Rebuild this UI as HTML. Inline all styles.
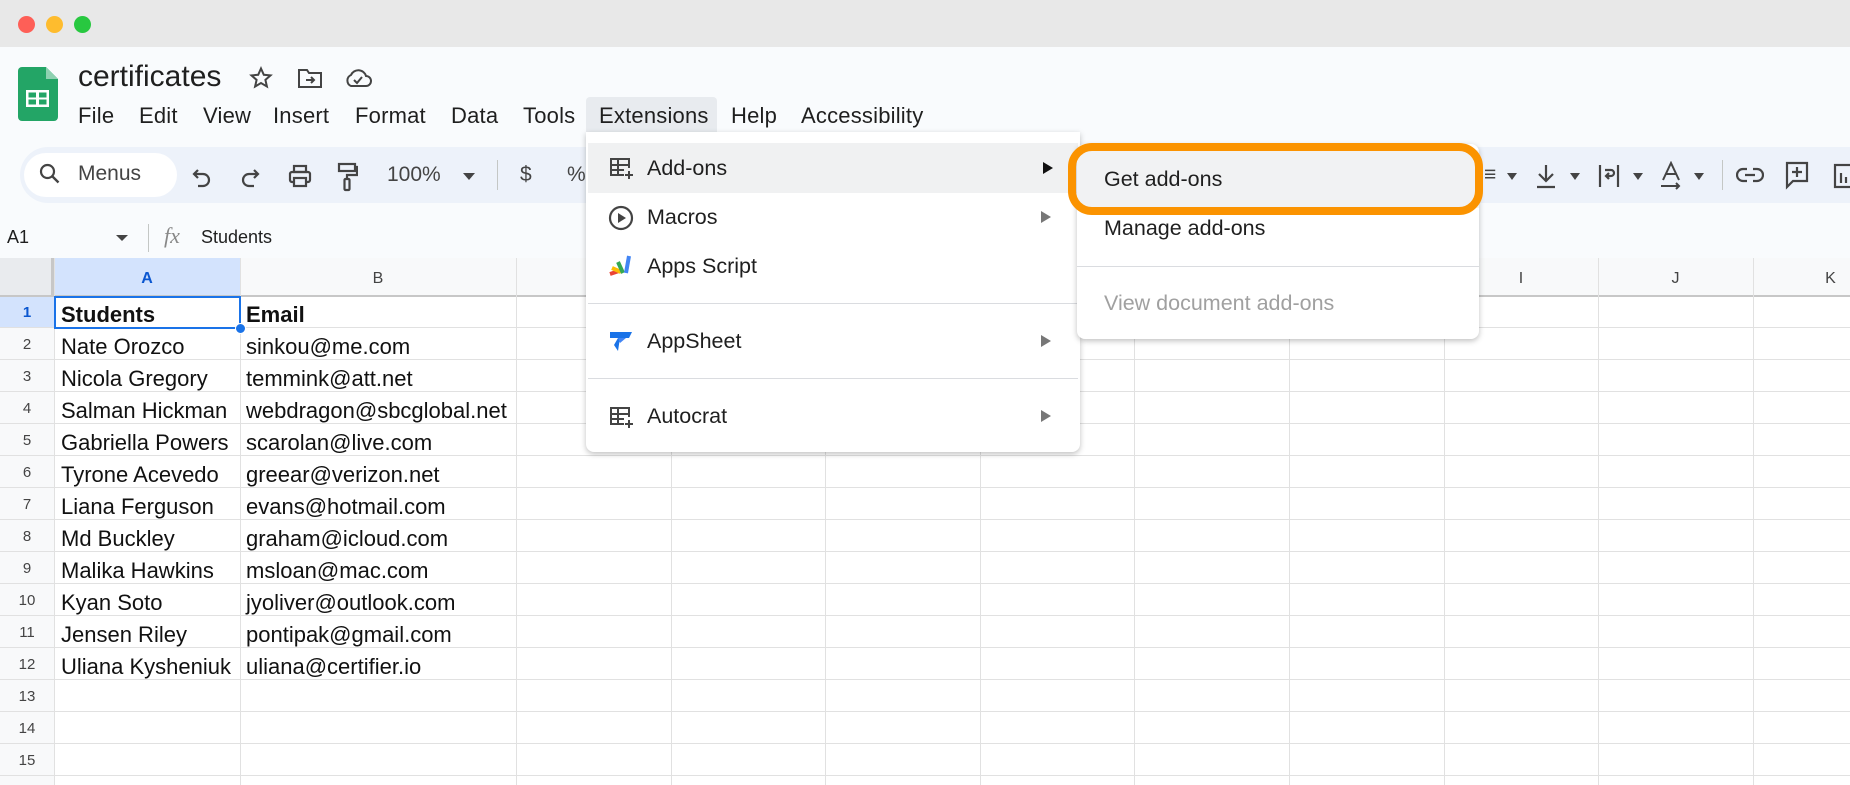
<!DOCTYPE html>
<html><head><meta charset="utf-8"><style>
*{margin:0;padding:0;box-sizing:border-box}
body{width:1850px;height:785px;overflow:hidden;background:#f9fbfd;font-family:"Liberation Sans",Arial,sans-serif;color:#1f1f1f;position:relative}
.a{position:absolute}
.t{position:absolute;white-space:nowrap}
.menu span{position:absolute;top:103px;font-size:22px;letter-spacing:0.2px}
.vl{position:absolute;top:258px;width:1px;height:527px;background:#e1e1e1}
.rn{position:absolute;left:0;width:54px;text-align:center;font-size:15px;color:#444}
.c{position:absolute;font-size:22px;color:#111;white-space:nowrap}
.ch{position:absolute;top:270px;font-size:16px;color:#444;text-align:center}
.mi{position:absolute;font-size:21.5px;color:#1f1f1f;white-space:nowrap}
.arr{position:absolute;left:1041px;width:0;height:0;border-left:10px solid #777;border-top:6px solid transparent;border-bottom:6px solid transparent}
</style></head><body>
<div class="a" style="left:0;top:0;width:1850px;height:47px;background:#e8e8e8"></div>
<div class="a" style="left:18px;top:16px;width:17px;height:17px;border-radius:50%;background:#fe5f57"></div>
<div class="a" style="left:46px;top:16px;width:17px;height:17px;border-radius:50%;background:#febc2e"></div>
<div class="a" style="left:74px;top:16px;width:17px;height:17px;border-radius:50%;background:#28c840"></div>

<svg class="a" style="left:18px;top:67px" width="40" height="54" viewBox="0 0 40 54"><path d="M4 0H28L40 12V50a4 4 0 0 1-4 4H4a4 4 0 0 1-4-4V4a4 4 0 0 1 4-4z" fill="#23a566"/><path d="M28 0V12H40z" fill="#8ed1b1"/><rect x="8" y="23" width="23" height="17" fill="#fff"/><rect x="10.5" y="25.5" width="7.5" height="5" fill="#23a566"/><rect x="21" y="25.5" width="7.5" height="5" fill="#23a566"/><rect x="10.5" y="32.5" width="7.5" height="5" fill="#23a566"/><rect x="21" y="32.5" width="7.5" height="5" fill="#23a566"/></svg>
<div class="t" style="left:78px;top:60px;font-size:30px;color:#1f1f1f">certificates</div>
<svg class="a" style="left:249px;top:66px" width="24" height="24" viewBox="0 0 24 24"><path d="M12 2.5l2.8 6.3 6.7.6-5.1 4.5 1.5 6.6L12 17l-5.9 3.5 1.5-6.6-5.1-4.5 6.7-.6z" fill="none" stroke="#444" stroke-width="2"/></svg>
<svg class="a" style="left:297px;top:67px" width="26" height="22" viewBox="0 0 26 22"><path d="M2 3h8l2 3h12v14H2z" fill="none" stroke="#444" stroke-width="2"/><path d="M9 13h8M14 10l3 3-3 3" fill="none" stroke="#444" stroke-width="2"/></svg>
<svg class="a" style="left:344px;top:67px" width="28" height="22" viewBox="0 0 28 22"><path d="M7 19h15a5 5 0 0 0 0-10 8 8 0 0 0-15-1 6 6 0 0 0 0 11z" fill="none" stroke="#444" stroke-width="2"/><path d="M10 13l3 3 5-6" fill="none" stroke="#444" stroke-width="2"/></svg>

<div class="a" style="left:586px;top:97px;width:131px;height:35px;background:#e8ebef;border-radius:4px 4px 0 0"></div>
<div class="menu">
<span style="left:78px">File</span><span style="left:139px">Edit</span><span style="left:203px">View</span><span style="left:273px">Insert</span><span style="left:355px">Format</span><span style="left:451px">Data</span><span style="left:523px">Tools</span><span style="left:599px">Extensions</span><span style="left:731px">Help</span><span style="left:801px">Accessibility</span>
</div>

<div class="a" style="left:20px;top:147px;width:1860px;height:56px;background:#edf2fa;border-radius:28px"></div>
<div class="a" style="left:24px;top:153px;width:153px;height:44px;background:#fff;border-radius:22px"></div>
<svg class="a" style="left:38px;top:162px" width="24" height="24" viewBox="0 0 24 24"><circle cx="9.5" cy="9.5" r="6.5" fill="none" stroke="#444" stroke-width="2.2"/><path d="M14.5 14.5l6 6" stroke="#444" stroke-width="2.4"/></svg>
<div class="t" style="left:78px;top:162px;font-size:21px;color:#444">Menus</div>
<svg class="a" style="left:190px;top:164px" width="24" height="24" viewBox="0 0 24 24"><path d="M8 6L4 10l4 4M4 10h9a6 6 0 0 1 0 12H8" fill="none" stroke="#444" stroke-width="2.2"/></svg>
<svg class="a" style="left:238px;top:164px" width="24" height="24" viewBox="0 0 24 24"><path d="M16 6l4 4-4 4M20 10h-9a6 6 0 0 0 0 12h5" fill="none" stroke="#444" stroke-width="2.2"/></svg>
<svg class="a" style="left:287px;top:163px" width="26" height="26" viewBox="0 0 26 26"><rect x="7" y="3" width="12" height="6" fill="none" stroke="#444" stroke-width="2.2"/><rect x="3" y="9" width="20" height="10" rx="2" fill="none" stroke="#444" stroke-width="2.2"/><rect x="7" y="15" width="12" height="8" fill="#edf2fa" stroke="#444" stroke-width="2.2"/></svg>
<svg class="a" style="left:336px;top:162px" width="22" height="30" viewBox="0 0 22 30"><rect x="3" y="2" width="16" height="7" fill="none" stroke="#444" stroke-width="2.2"/><path d="M19 5h2v8H11v4" fill="none" stroke="#444" stroke-width="2.2"/><rect x="8.5" y="17" width="5" height="11" rx="1" fill="none" stroke="#444" stroke-width="2.2"/></svg>
<div class="t" style="left:387px;top:163px;font-size:21px;color:#444">100%</div>
<div class="a" style="left:463px;top:173px;border-top:7px solid #444;border-left:6px solid transparent;border-right:6px solid transparent"></div>
<div class="a" style="left:497px;top:160px;width:1px;height:30px;background:#c4c7c5"></div>
<div class="t" style="left:520px;top:163px;font-size:21px;color:#444">$</div>
<div class="t" style="left:567px;top:163px;font-size:21px;color:#444">%</div>
<div class="t" style="left:1484px;top:163px;font-size:21px;color:#444">&#8801;</div>
<div class="a" style="left:1507px;top:173px;border-top:7px solid #444;border-left:5px solid transparent;border-right:5px solid transparent"></div>
<svg class="a" style="left:1534px;top:162px" width="24" height="28" viewBox="0 0 24 28"><path d="M12 3v16M5 12l7 7 7-7M3 25h18" fill="none" stroke="#444" stroke-width="2.2"/></svg>
<div class="a" style="left:1570px;top:173px;border-top:7px solid #444;border-left:5px solid transparent;border-right:5px solid transparent"></div>
<svg class="a" style="left:1597px;top:162px" width="24" height="28" viewBox="0 0 24 28"><path d="M3 3v22M21 3v22M8 8h6a3 3 0 0 1 0 6H9M12 11l-3 3 3 3" fill="none" stroke="#444" stroke-width="2.2"/></svg>
<div class="a" style="left:1633px;top:173px;border-top:7px solid #444;border-left:5px solid transparent;border-right:5px solid transparent"></div>
<svg class="a" style="left:1659px;top:161px" width="24" height="30" viewBox="0 0 24 30"><path d="M4 19L12 2l8 17M7 13h10M2 25h18M17 22l3 3-3 3" fill="none" stroke="#444" stroke-width="2"/></svg>
<div class="a" style="left:1694px;top:173px;border-top:7px solid #444;border-left:5px solid transparent;border-right:5px solid transparent"></div>
<div class="a" style="left:1722px;top:160px;width:1px;height:30px;background:#c4c7c5"></div>
<svg class="a" style="left:1736px;top:164px" width="28" height="22" viewBox="0 0 28 22"><path d="M11 5H7a6 6 0 0 0 0 12h4M17 5h4a6 6 0 0 1 0 12h-4M9 11h10" fill="none" stroke="#444" stroke-width="2.2"/></svg>
<svg class="a" style="left:1784px;top:160px" width="26" height="30" viewBox="0 0 26 30"><path d="M3 3h20v18H9l-6 6z" fill="none" stroke="#444" stroke-width="2.2"/><path d="M13 7v10M8 12h10" stroke="#444" stroke-width="2.2"/></svg>
<svg class="a" style="left:1833px;top:163px" width="20" height="26" viewBox="0 0 20 26"><rect x="2" y="2" width="20" height="22" fill="none" stroke="#444" stroke-width="2.2"/><path d="M8 10v10M13 14v6" stroke="#444" stroke-width="2.2"/></svg>

<div class="t" style="left:7px;top:227px;font-size:18px;color:#1f1f1f">A1</div>
<div class="a" style="left:116px;top:235px;border-top:6px solid #444;border-left:6px solid transparent;border-right:6px solid transparent"></div>
<div class="a" style="left:148px;top:224px;width:1px;height:28px;background:#c4c7c5"></div>
<div class="t" style="left:164px;top:223px;font-size:22px;color:#888;font-style:italic;font-family:'Liberation Serif',serif">fx</div>
<div class="t" style="left:201px;top:227px;font-size:18px;color:#1f1f1f">Students</div>

<div class="a" style="left:0;top:258px;width:1850px;height:527px;background:#fff"></div>
<div class="a" style="left:0;top:258px;width:1850px;height:38px;background:#f8f9fa"></div>
<div class="a" style="left:0;top:258px;width:54px;height:527px;background:#f8f9fa"></div>
<div class="a" style="left:0;top:258px;width:54px;height:38px;background:#e9ebee"></div>
<div class="a" style="left:54px;top:258px;width:186px;height:38px;background:#d3e3fd"></div>
<div class="a" style="left:0;top:296px;width:54px;height:32px;background:#d3e3fd"></div>
<div class="a" style="left:0;top:295px;width:1850px;height:2px;background:#c7c7c7"></div>
<div class="a" style="left:51px;top:258px;width:4px;height:38px;background:#c7c7c7"></div>
<div class="a" style="left:0;top:296px;width:1850px;height:489px;background:repeating-linear-gradient(to bottom,transparent 0,transparent 31px,#e1e1e1 31px,#e1e1e1 32px)"></div>
<div class="vl" style="left:54px"></div><div class="vl" style="left:240px"></div><div class="vl" style="left:516px"></div><div class="vl" style="left:671px"></div><div class="vl" style="left:825px"></div><div class="vl" style="left:980px"></div><div class="vl" style="left:1134px"></div><div class="vl" style="left:1289px"></div><div class="vl" style="left:1444px"></div><div class="vl" style="left:1598px"></div><div class="vl" style="left:1753px"></div>
<div class="ch" style="left:54px;width:186px;color:#0b57d0;font-weight:bold">A</div>
<div class="ch" style="left:240px;width:276px">B</div>
<div class="ch" style="left:1444px;width:154px">I</div>
<div class="ch" style="left:1598px;width:155px">J</div>
<div class="ch" style="left:1753px;width:155px">K</div>

<div class="rn" style="top:304px;font-weight:bold;color:#0b57d0">1</div>
<div class="rn" style="top:336px">2</div><div class="rn" style="top:368px">3</div><div class="rn" style="top:400px">4</div><div class="rn" style="top:432px">5</div><div class="rn" style="top:464px">6</div><div class="rn" style="top:496px">7</div><div class="rn" style="top:528px">8</div><div class="rn" style="top:560px">9</div><div class="rn" style="top:592px">10</div><div class="rn" style="top:624px">11</div><div class="rn" style="top:656px">12</div><div class="rn" style="top:688px">13</div><div class="rn" style="top:720px">14</div><div class="rn" style="top:752px">15</div>

<div class="c" style="left:61px;top:302px;font-weight:bold">Students</div><div class="c" style="left:246px;top:302px;font-weight:bold">Email</div>
<div class="c" style="left:61px;top:334px">Nate Orozco</div><div class="c" style="left:246px;top:334px">sinkou@me.com</div>
<div class="c" style="left:61px;top:366px">Nicola Gregory</div><div class="c" style="left:246px;top:366px">temmink@att.net</div>
<div class="c" style="left:61px;top:398px">Salman Hickman</div><div class="c" style="left:246px;top:398px">webdragon@sbcglobal.net</div>
<div class="c" style="left:61px;top:430px">Gabriella Powers</div><div class="c" style="left:246px;top:430px">scarolan@live.com</div>
<div class="c" style="left:61px;top:462px">Tyrone Acevedo</div><div class="c" style="left:246px;top:462px">greear@verizon.net</div>
<div class="c" style="left:61px;top:494px">Liana Ferguson</div><div class="c" style="left:246px;top:494px">evans@hotmail.com</div>
<div class="c" style="left:61px;top:526px">Md Buckley</div><div class="c" style="left:246px;top:526px">graham@icloud.com</div>
<div class="c" style="left:61px;top:558px">Malika Hawkins</div><div class="c" style="left:246px;top:558px">msloan@mac.com</div>
<div class="c" style="left:61px;top:590px">Kyan Soto</div><div class="c" style="left:246px;top:590px">jyoliver@outlook.com</div>
<div class="c" style="left:61px;top:622px">Jensen Riley</div><div class="c" style="left:246px;top:622px">pontipak@gmail.com</div>
<div class="c" style="left:61px;top:654px">Uliana Kysheniuk</div><div class="c" style="left:246px;top:654px">uliana@certifier.io</div>

<div class="a" style="left:54px;top:296px;width:187px;height:33px;border:2px solid #1a73e8"></div>
<div class="a" style="left:235px;top:323px;width:11px;height:11px;border-radius:50%;background:#1a73e8;border:1px solid #fff"></div>

<div class="a" style="left:586px;top:132px;width:494px;height:320px;background:#fff;border-radius:0 0 8px 8px;box-shadow:0 2px 6px rgba(0,0,0,.25)"></div>
<div class="a" style="left:588px;top:143px;width:490px;height:50px;background:#f0f1f2"></div>
<div class="a" style="left:588px;top:303px;width:490px;height:1px;background:#dadce0"></div>
<div class="a" style="left:588px;top:378px;width:490px;height:1px;background:#dadce0"></div>
<svg class="a" style="left:609px;top:157px" width="26" height="24" viewBox="0 0 26 24"><path d="M15 18H2V2h18v9M2 8h18M2 13h13M9 2v16" fill="none" stroke="#444" stroke-width="2"/><path d="M20 14v8M16 18h8" stroke="#444" stroke-width="2"/></svg>
<div class="mi" style="left:647px;top:156px">Add-ons</div>
<div class="a" style="left:1043px;top:162px;border-left:10px solid #111;border-top:6px solid transparent;border-bottom:6px solid transparent"></div>
<svg class="a" style="left:608px;top:205px" width="26" height="26" viewBox="0 0 26 26"><circle cx="13" cy="13" r="11" fill="none" stroke="#444" stroke-width="2.2"/><path d="M10 8v10l8-5z" fill="#444"/></svg>
<div class="mi" style="left:647px;top:205px">Macros</div>
<div class="arr" style="top:211px"></div>
<svg class="a" style="left:608px;top:254px" width="26" height="24" viewBox="0 0 26 24"><path d="M2 20l9-3" stroke="#ea4335" stroke-width="4"/><path d="M4 14l9 4" stroke="#fbbc04" stroke-width="4"/><path d="M10 8l5 11" stroke="#34a853" stroke-width="4"/><path d="M21 2l-3 17" stroke="#4285f4" stroke-width="4"/></svg>
<div class="mi" style="left:647px;top:254px">Apps Script</div>
<svg class="a" style="left:608px;top:330px" width="26" height="24" viewBox="0 0 26 24"><path d="M2 2h22l-3 6H12l-2 13-4-6 4-7H2z" fill="#1a73e8"/><path d="M10 8h8l-6 5z" fill="#4285f4"/></svg>
<div class="mi" style="left:647px;top:329px">AppSheet</div>
<div class="arr" style="top:335px"></div>
<svg class="a" style="left:609px;top:406px" width="26" height="24" viewBox="0 0 26 24"><path d="M15 18H2V2h18v9M2 8h18M2 13h13M9 2v16" fill="none" stroke="#444" stroke-width="2"/><path d="M20 14v8M16 18h8" stroke="#444" stroke-width="2"/></svg>
<div class="mi" style="left:647px;top:404px">Autocrat</div>
<div class="arr" style="top:410px"></div>

<div class="a" style="left:1077px;top:144px;width:402px;height:195px;background:#fff;border-radius:8px;box-shadow:0 2px 6px rgba(0,0,0,.25)"></div>
<div class="a" style="left:1077px;top:150px;width:402px;height:58px;background:#f1f2f3"></div>
<div class="a" style="left:1077px;top:266px;width:402px;height:1px;background:#dadce0"></div>
<div class="mi" style="left:1104px;top:167px">Get add-ons</div>
<div class="mi" style="left:1104px;top:216px">Manage add-ons</div>
<div class="mi" style="left:1104px;top:291px;color:#a0a0a0">View document add-ons</div>
<div class="a" style="left:1068px;top:143px;width:415px;height:72px;border:8px solid #fb9300;border-radius:24px"></div>
</body></html>
